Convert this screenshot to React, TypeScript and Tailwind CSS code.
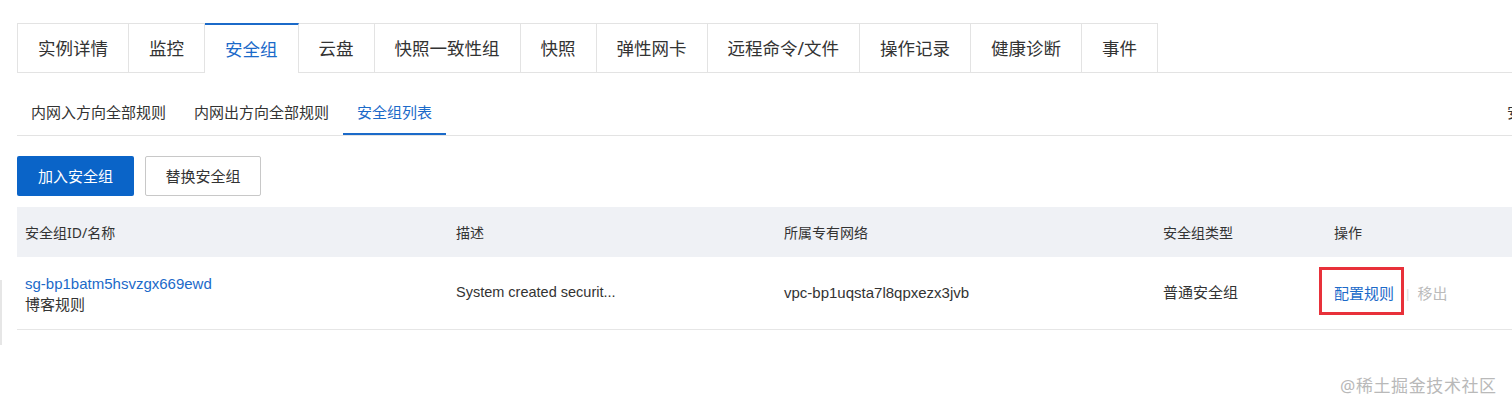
import React from 'react';

const tabs = ['实例详情', '监控', '安全组', '云盘', '快照一致性组', '快照', '弹性网卡', '远程命令/文件', '操作记录', '健康诊断', '事件'];
const subTabs = ['内网入方向全部规则', '内网出方向全部规则', '安全组列表'];
const cols = ['安全组ID/名称', '描述', '所属专有网络', '安全组类型', '操作'];

const App = () => {
	return (
		<div className="relative w-[1512px] h-[411px] overflow-hidden bg-white text-[#333] font-['Noto_Sans','Noto_Sans_CJK_SC',sans-serif]">
			<div className="absolute left-0 top-[280px] h-[65px] w-[2px] bg-[#e6e6e6]" />
			<div className="pl-[17px] pt-[23px]">
				{/* main tabs */}
				<div className="flex h-[50px] border-b border-[#e3e3e3]">
					{tabs.map((t, i) => (
						<div
							key={t}
							className={
								i === 2
									? 'flex items-center px-[20px] text-[17.5px] text-[#1b6ac9] bg-white border-t-2 border-t-[#1b6ac9] border-r border-r-[#e3e3e3] -mb-px'
									: 'flex items-center px-[20px] text-[17.5px] text-[#333] bg-white border-t border-r border-[#e3e3e3] first:border-l'
							}
						>
							{t}
						</div>
					))}
				</div>

				{/* sub tabs */}
				<div className="flex h-[63px] border-b border-[#e3e3e3] relative">
					{subTabs.map((t, i) => (
						<div
							key={t}
							className={
								i === 2
									? 'h-full pt-[28px] px-[14px] text-[15px] text-[#1b6ac9] border-b-2 border-[#1b6ac9] -mb-px'
									: 'h-full pt-[28px] px-[14px] text-[15px] text-[#333]'
							}
						>
							{t}
						</div>
					))}
					<div className="absolute left-[1490px] top-[28px] whitespace-nowrap text-[15px] text-[#333]">安全组</div>
				</div>

				{/* buttons */}
				<div className="flex gap-[11px] mt-[20px]">
					<button className="h-[40px] w-[117px] rounded-[2px] bg-[#0a64c8] text-white text-[15px]">加入安全组</button>
					<button className="h-[40px] w-[116px] rounded-[2px] border border-[#c8c8c8] bg-white text-[15px] text-[#333]">替换安全组</button>
				</div>

				{/* table */}
				<div className="mt-[11px]">
					<div className="grid grid-cols-[431px_328px_379px_171px_1fr] h-[50px] bg-[#eff1f5] items-center text-[14px] text-[#333]">
						{cols.map(c => (
							<div key={c} className="px-[8px]">{c}</div>
						))}
					</div>
					<div className="grid grid-cols-[431px_328px_379px_171px_1fr] h-[73px] items-center border-b border-[#e6e6e6] text-[15px] font-['Liberation_Sans','Noto_Sans_CJK_SC',sans-serif]">
						<div className="px-[8px] leading-[21px] pt-[1px]">
							<div className="text-[#1b6ac9]">sg-bp1batm5hsvzgx669ewd</div>
							<div className="text-[#333]">博客规则</div>
						</div>
						<div className="px-[8px] text-[14.5px]">System created securit...</div>
						<div className="px-[8px]">vpc-bp1uqsta7l8qpxezx3jvb</div>
						<div className="px-[8px]">普通安全组</div>
						<div className="px-[8px] flex items-center leading-[21px]">
							<span className="relative text-[#1b6ac9]">
								配置规则
								<span className="absolute left-[-15px] right-[-10px] top-[-16px] bottom-[-11px] border-[3px] border-[#e8313a]" />
							</span>
							<span className="ml-[12px] text-[#ddd] text-[13px]">|</span>
							<span className="ml-[8px] text-[#bbb]">移出</span>
						</div>
					</div>
				</div>
			</div>

			<div className="absolute left-[1340px] top-[373px] text-[17px] text-[#b9b9b9] tracking-[0.6px]">@稀土掘金技术社区</div>
		</div>
	);
};

export default App;
